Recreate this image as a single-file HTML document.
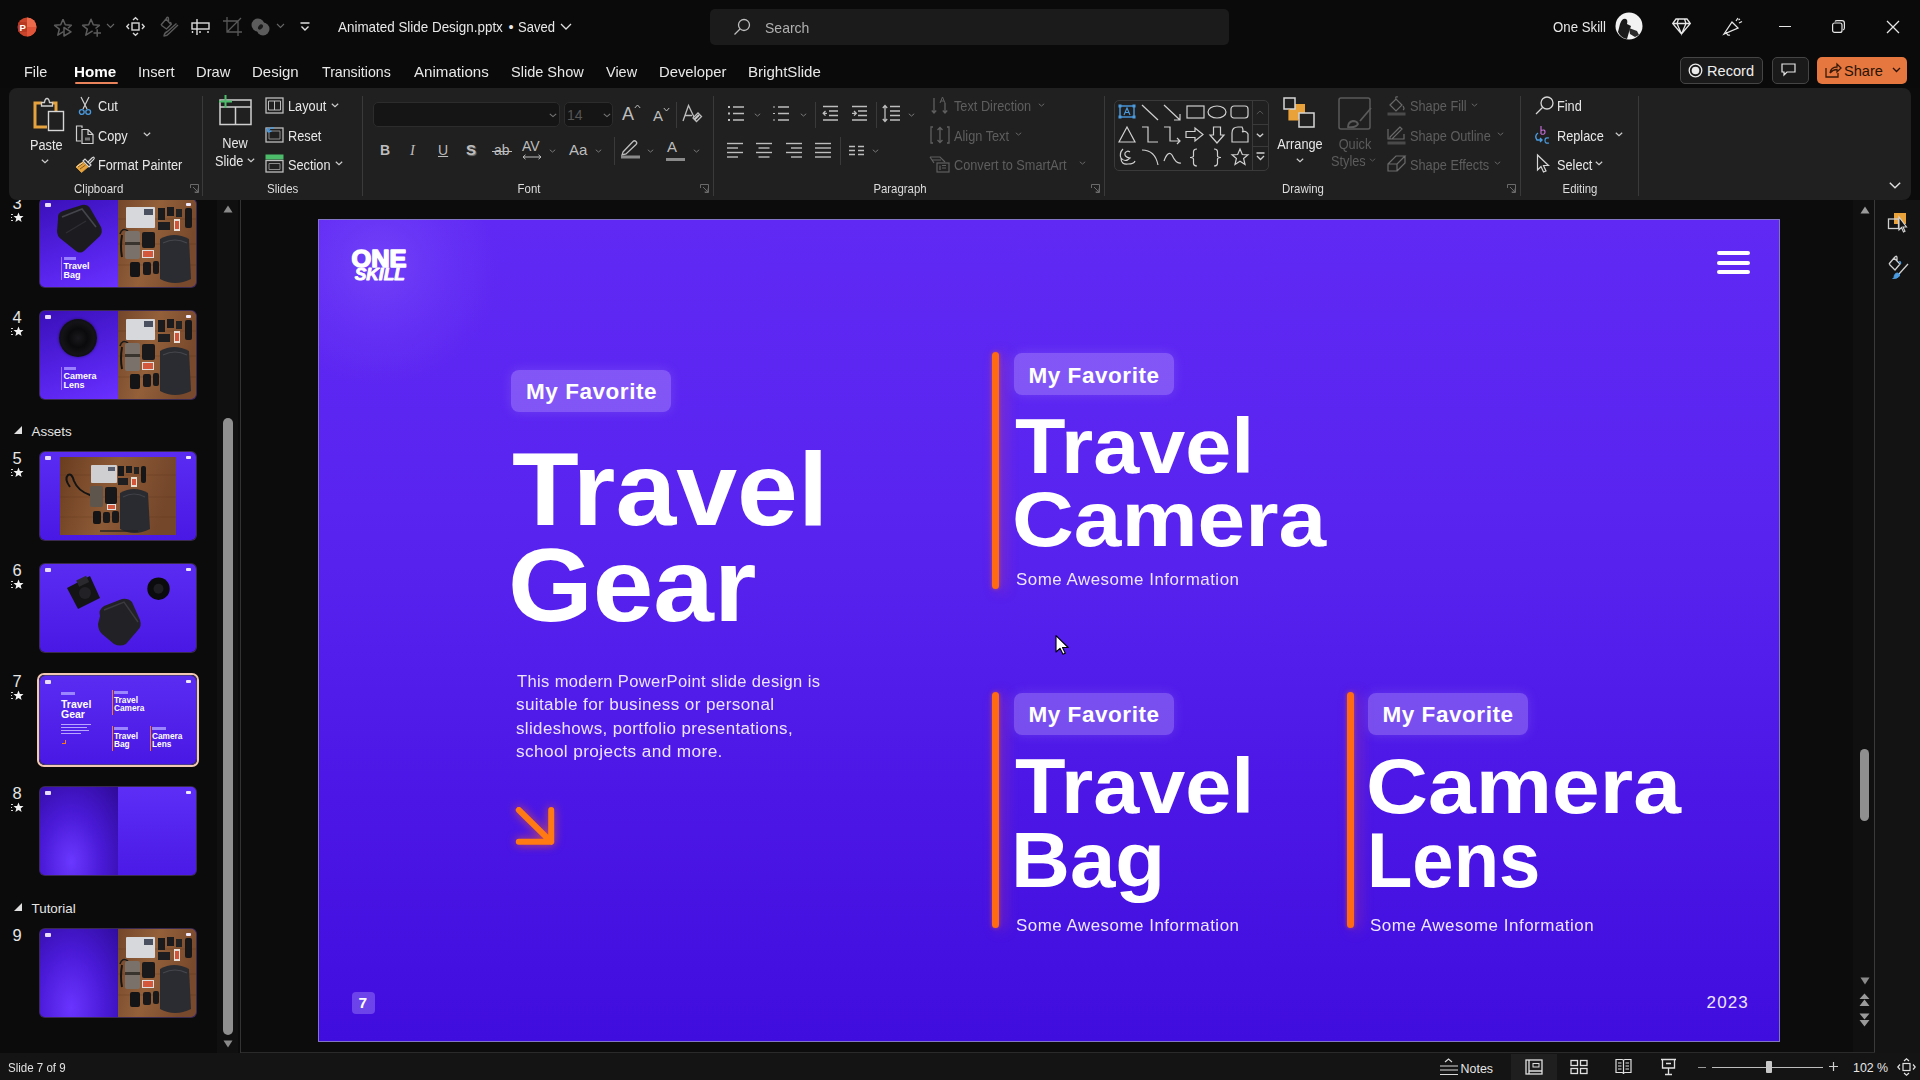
<!DOCTYPE html>
<html><head><meta charset="utf-8">
<style>
*{margin:0;padding:0;box-sizing:border-box}
html,body{width:1920px;height:1080px;overflow:hidden;background:#0b0b0b;font-family:"Liberation Sans",sans-serif;color:#e6e6e6}
.a{position:absolute}
.t{position:absolute;white-space:nowrap;line-height:1}
svg{position:absolute;overflow:visible}
/* title bar */
#title{left:0;top:0;width:1920px;height:88px;background:#0a0a0a}
.tab{position:absolute;top:65px;font-size:15px;color:#e8e8e8;white-space:nowrap;line-height:1}
/* ribbon */
#ribbon{left:9px;top:88px;width:1902px;height:112px;background:#202020;border-radius:8px}
.rl{position:absolute;font-size:13.5px;color:#e6e6e6;white-space:nowrap;line-height:1}
.dis{color:#6a6a6a}
.sep{position:absolute;width:1px;background:#3a3a3a}
.glab{position:absolute;top:182px;font-size:12.5px;color:#d8d8d8;white-space:nowrap;line-height:1}
/* thumbs */
.th{position:absolute;left:40px;width:156px;height:88px;border-radius:4px;overflow:hidden;background:#5a2af0}
.num{position:absolute;left:12px;font-size:16px;color:#e0e0e0;line-height:1}
.star{position:absolute;left:10px;font-size:12px;color:#fff;line-height:1}
/* slide */
#slide{left:318px;top:219px;width:1462px;height:823px;overflow:hidden;
 background:linear-gradient(180deg,#6029f4 0%,#5a24f0 35%,#4c17e6 70%,#400ddf 100%)}
.badge{position:absolute;width:160px;height:42px;border-radius:8px;background:rgba(205,185,255,0.33);box-shadow:0 0 12px rgba(190,170,255,0.2)}
.badge span{position:absolute;left:15px;top:11px;font-size:23px;font-weight:bold;color:#fff;line-height:1;white-space:nowrap}
.big{position:absolute;font-weight:bold;color:#fff;white-space:nowrap;line-height:1}
.bar{position:absolute;width:7px;border-radius:4px;background:#ff6a13;box-shadow:0 0 4px rgba(255,110,30,0.5),5px 2px 14px rgba(230,80,90,0.35)}
.info{position:absolute;font-size:16px;color:#f0eaff;letter-spacing:0.9px;white-space:nowrap;line-height:1}
</style></head><body>

<!-- TITLE BAR -->
<div id="title" class="a"></div>
<!-- ppt logo -->
<svg style="left:17px;top:17px" width="20" height="20" viewBox="0 0 20 20">
 <circle cx="10" cy="10" r="9.5" fill="#c8442a"/>
 <path d="M10 0.5 A9.5 9.5 0 0 1 19.5 10 L10 10 Z" fill="#ed6b4d"/>
 <path d="M19.5 10 A9.5 9.5 0 0 1 10 19.5 L10 10Z" fill="#e0553a"/>
 <rect x="1" y="5" width="9" height="10" rx="1.5" fill="#b63a22"/>
 <text x="2.6" y="13.6" font-size="9.5" font-weight="bold" fill="#fff" font-family="Liberation Sans">P</text>
</svg>
<!-- star play -->
<svg style="left:54px;top:18px" width="20" height="19" viewBox="0 0 20 19" fill="none" stroke="#5c5c5c" stroke-width="1.5" stroke-linejoin="round">
 <path d="M9.0 1.2 L11.3 6.8 L17.4 7.3 L14 10.2 M9.5 13.5 L9.0 13.9 L3.8 17.1 L5.3 11.2 L0.6 7.3 L6.7 6.8 L9.0 1.2"/>
 <path d="M10 9.5 V18 L17 13.8 Z"/>
</svg>
<svg style="left:82px;top:18px" width="20" height="19" viewBox="0 0 20 19" fill="none" stroke="#5c5c5c" stroke-width="1.5" stroke-linejoin="round">
 <path d="M10.6 13 L9.0 13.9 L3.8 17.1 L5.3 11.2 L0.6 7.3 L6.7 6.8 L9.0 1.2 L11.3 6.8 L17.4 7.3 L13.5 10.5"/>
 <path d="M11.5 15 H19 M15.2 11.2 V18.8"/>
</svg>
<svg style="left:106px;top:23px" width="9" height="6" viewBox="0 0 9 6" fill="none" stroke="#666" stroke-width="1.1"><path d="M1 1 L4.5 4.5 L8 1"/></svg>
<!-- move icon -->
<svg style="left:126px;top:17px" width="19" height="19" viewBox="0 0 19 19" fill="none" stroke="#d6d6d6" stroke-width="1.4">
 <rect x="6" y="6" width="7" height="7"/>
 <path d="M7 3 L9.5 0.8 L12 3 M7 16 L9.5 18.2 L12 16 M3 7 L0.8 9.5 L3 12 M16 7 L18.2 9.5 L16 12"/>
</svg>
<!-- paint icon gray -->
<svg style="left:160px;top:16px" width="19" height="21" viewBox="0 0 19 21" fill="none" stroke="#5a5a5a" stroke-width="1.4" stroke-linejoin="round">
 <path d="M1 9 L6 3 L7 1.5 Q8.5 0.8 8.5 3 L8.5 6 M6 3 L11 8.5 L6.5 13 L1 9"/>
 <path d="M9.5 6.5 Q11.5 6 11 9"/>
 <path d="M18 9 L9 17.5 Q7 20 4 20 Q4.5 16.5 7.5 15.5 L16.5 7.5"/>
</svg>
<!-- align icon -->
<svg style="left:191px;top:19px" width="20" height="16" viewBox="0 0 20 16" fill="none" stroke="#dcdcdc" stroke-width="1.4">
 <path d="M6 0 V16"/><rect x="1" y="4" width="17" height="6"/><path d="M1.5 12 V14 M9 12 V14 M17 12 V14"/>
</svg>
<!-- crop -->
<svg style="left:223px;top:17px" width="20" height="20" viewBox="0 0 20 20" fill="none" stroke="#585858" stroke-width="1.3">
 <path d="M4 0 V15 H19 M0 4 H15 V19 M4 15 L18 1"/>
</svg>
<!-- merge shapes -->
<svg style="left:251px;top:17px" width="20" height="20" viewBox="0 0 20 20">
 <circle cx="7" cy="8" r="6.5" fill="#5c5c5c"/><circle cx="12" cy="12" r="6.5" fill="#5c5c5c"/>
 <ellipse cx="9.5" cy="10" rx="2" ry="3" transform="rotate(40 9.5 10)" fill="#1a1a1a"/>
</svg>
<svg style="left:276px;top:23px" width="9" height="6" viewBox="0 0 9 6" fill="none" stroke="#666" stroke-width="1.1"><path d="M1 1 L4.5 4.5 L8 1"/></svg>
<svg style="left:300px;top:22px" width="10" height="10" viewBox="0 0 10 10" fill="none" stroke="#e0e0e0" stroke-width="1.4"><path d="M0.5 1 H9.5 M1.5 4.5 L5 8 L8.5 4.5"/></svg>
<svg style="left:560px;top:23px" width="12" height="7" viewBox="0 0 12 7" fill="none" stroke="#e0e0e0" stroke-width="1.3"><path d="M1 1 L6 6 L11 1"/></svg>
<!-- search -->
<div class="a" style="left:710px;top:9px;width:519px;height:36px;border-radius:5px;background:#1b1b1b"></div>
<svg style="left:733px;top:18px" width="18" height="18" viewBox="0 0 18 18" fill="none" stroke="#bdbdbd" stroke-width="1.3"><circle cx="11" cy="7" r="5.5"/><path d="M7 11 L1.5 16.5"/></svg>

<!-- TITLETEXT -->
<div class="t" style="left:338.30px;top:20.03px;font-size:14.5px;color:#e8e8e8;transform:scaleX(0.9253);transform-origin:0 0">Animated Slide Design.pptx</div>
<div class="t" style="left:518.10px;top:20.03px;font-size:14.5px;color:#e8e8e8;transform:scaleX(0.8974);transform-origin:0 0">Saved</div>
<div class="t" style="left:1552.59px;top:20.03px;font-size:14.5px;color:#e8e8e8;transform:scaleX(0.9125);transform-origin:0 0">One Skill</div>
<div class="t" style="left:764.63px;top:20.63px;font-size:14.5px;color:#b0b0b0;transform:scaleX(0.9659);transform-origin:0 0">Search</div>
<div class="t" style="left:508.5px;top:20.03px;font-size:14.5px;color:#e8e8e8">•</div>
<!-- /TITLETEXT -->
<!-- right -->

<svg style="left:1615px;top:12px" width="28" height="28" viewBox="0 0 28 28">
 <circle cx="14" cy="14" r="13.5" fill="#f2f2f2"/>
 <path d="M5 12 Q7 6 11 7 Q13 8 12 12 L16 14 L14 20 L12 27 Q6 26 3 20 Z" fill="#1a1a1a"/>
 <path d="M14 16 L22 19 L24 23 L20 25 L15 22Z" fill="#2a2a2a"/>
</svg>
<svg style="left:1672px;top:18px" width="19" height="17" viewBox="0 0 19 17" fill="none" stroke="#e6e6e6" stroke-width="1.3">
 <path d="M4 1 H15 L18.3 5.5 L9.5 16 L0.7 5.5 Z M0.7 5.5 H18.3 M6.5 1 L5 5.5 L9.5 16 L14 5.5 L12.5 1"/>
</svg>
<svg style="left:1722px;top:16px" width="22" height="21" viewBox="0 0 22 21" fill="none" stroke="#e6e6e6" stroke-width="1.3">
 <path d="M2 18 L10 6 L16 12 Z M4.5 16 Q5 20 8 19"/><path d="M14 5 L16 2 M17 7 L20 5.5 M16.5 4 L18 3"/>
</svg>
<div class="a" style="left:1779px;top:26px;width:12px;height:1.3px;background:#e6e6e6"></div>
<svg style="left:1832px;top:20px" width="13" height="13" viewBox="0 0 13 13" fill="none" stroke="#e6e6e6" stroke-width="1.2">
 <rect x="0.6" y="3" width="9.4" height="9.4" rx="2"/><path d="M3 1.5 Q3.5 0.6 5 0.6 H10 Q12.4 0.6 12.4 3 V8 Q12.4 9.5 11 10"/>
</svg>
<svg style="left:1886px;top:20px" width="14" height="14" viewBox="0 0 14 14" fill="none" stroke="#e6e6e6" stroke-width="1.3"><path d="M1 1 L13 13 M13 1 L1 13"/></svg>

<!-- TABS -->
<div class="t" style="left:23.50px;top:65.03px;font-size:14.5px;font-weight:normal;color:#e8e8e8;transform:scaleX(0.9955);transform-origin:0 0">File</div>
<div class="t" style="left:74.45px;top:65.03px;font-size:14.5px;font-weight:bold;color:#fff;transform:scaleX(1.0487);transform-origin:0 0">Home</div>
<div class="t" style="left:137.99px;top:65.03px;font-size:14.5px;font-weight:normal;color:#e8e8e8;transform:scaleX(1.0114);transform-origin:0 0">Insert</div>
<div class="t" style="left:196.48px;top:65.03px;font-size:14.5px;font-weight:normal;color:#e8e8e8;transform:scaleX(1.0152);transform-origin:0 0">Draw</div>
<div class="t" style="left:251.97px;top:65.03px;font-size:14.5px;font-weight:normal;color:#e8e8e8;transform:scaleX(1.0349);transform-origin:0 0">Design</div>
<div class="t" style="left:321.60px;top:65.03px;font-size:14.5px;font-weight:normal;color:#e8e8e8;transform:scaleX(0.9771);transform-origin:0 0">Transitions</div>
<div class="t" style="left:414.20px;top:65.03px;font-size:14.5px;font-weight:normal;color:#e8e8e8;transform:scaleX(1.0423);transform-origin:0 0">Animations</div>
<div class="t" style="left:510.60px;top:65.03px;font-size:14.5px;font-weight:normal;color:#e8e8e8;transform:scaleX(1.0028);transform-origin:0 0">Slide Show</div>
<div class="t" style="left:605.80px;top:65.03px;font-size:14.5px;font-weight:normal;color:#e8e8e8;transform:scaleX(0.9968);transform-origin:0 0">View</div>
<div class="t" style="left:658.58px;top:65.03px;font-size:14.5px;font-weight:normal;color:#e8e8e8;transform:scaleX(1.0215);transform-origin:0 0">Developer</div>
<div class="t" style="left:748.46px;top:65.03px;font-size:14.5px;font-weight:normal;color:#e8e8e8;transform:scaleX(1.0391);transform-origin:0 0">BrightSlide</div>
<div class="a" style="left:75px;top:81.5px;width:43px;height:2.6px;border-radius:2px;background:#e9835c"></div>
<!-- /TABS -->
<!-- record / comment / share -->
<div class="a" style="left:1680px;top:57px;width:83px;height:27px;border-radius:5px;border:1px solid #454545;background:#1a1a1a"></div>
<svg style="left:1688px;top:63px" width="15" height="15" viewBox="0 0 15 15"><circle cx="7.5" cy="7.5" r="6.3" fill="none" stroke="#eaeaea" stroke-width="1.3"/><circle cx="7.5" cy="7.5" r="3.8" fill="#eaeaea"/></svg>
<div class="t" style="left:1707px;top:63.5px;font-size:14.6px;color:#eeeeee">Record</div>
<div class="a" style="left:1772px;top:57px;width:37px;height:27px;border-radius:5px;border:1px solid #454545;background:#1a1a1a"></div>
<svg style="left:1781px;top:63px" width="15" height="14" viewBox="0 0 15 14" fill="none" stroke="#e6e6e6" stroke-width="1.2"><path d="M1 1 H14 V9 H6 L3 12 V9 H1 Z"/></svg>
<div class="a" style="left:1817px;top:57px;width:90px;height:27px;border-radius:5px;background:#e5773f"></div>
<svg style="left:1825px;top:62px" width="17" height="16" viewBox="0 0 17 16" fill="none" stroke="#3a1a08" stroke-width="1.3"><path d="M1 6 V15 H13 V11 M5 11 Q6 5 12 5 V2 L16 6 L12 10 V7.5 Q8 7.5 5 11"/></svg>
<div class="t" style="left:1844px;top:63.5px;font-size:14.6px;color:#2a1206">Share</div>
<svg style="left:1892px;top:67px" width="9" height="6" viewBox="0 0 9 6" fill="none" stroke="#2a1206" stroke-width="1.3"><path d="M1 1 L4.5 4.5 L8 1"/></svg>

<!-- RIBBON -->
<div id="ribbon" class="a"></div>
<svg style="left:32px;top:96px" width="34" height="37" viewBox="0 0 34 37" fill="none" stroke="#cfcfcf" stroke-width="1"><path d="M9.5 7 H3 V31 H15" stroke="#e6a23c" stroke-width="3"/><path d="M20.5 7 H24 V16" stroke="#e6a23c" stroke-width="3"/><path d="M9.5 10 V6.5 H12.5 Q13 2.5 15 2.5 Q17 2.5 17.5 6.5 H20.5 V10 Z" stroke="#cfcfcf" stroke-width="1.3" fill="#202020"/><rect x="16.5" y="15.5" width="15" height="19" stroke="#d6d6d6" stroke-width="1.4" fill="#202020"/></svg>
<div class="t" style="left:30px;top:137.56px;font-size:14px;color:#e8e8e8;transform:scaleX(0.91);transform-origin:0 0;">Paste</div>
<svg style="left:41.0px;top:158.8px" width="8" height="4.4" viewBox="0 0 8 4.4" fill="none" stroke="#cfcfcf" stroke-width="1.2"><path d="M0.8 0.8 L4.0 3.6000000000000005 L7.2 0.8"/></svg>
<svg style="left:78px;top:96px" width="14" height="20" viewBox="0 0 14 20" fill="none" stroke="#cfcfcf" stroke-width="1.2"><path d="M3 1 L9 13 M11 1 L5 13" stroke="#d0d0d0"/><circle cx="3.8" cy="16" r="2.4" stroke="#4a9be0" stroke-width="1.3"/><circle cx="10.2" cy="16" r="2.4" stroke="#4a9be0" stroke-width="1.3"/></svg>
<div class="t" style="left:98px;top:99.47px;font-size:14px;color:#e8e8e8;transform:scaleX(0.91);transform-origin:0 0;">Cut</div>
<svg style="left:75px;top:125px" width="20" height="20" viewBox="0 0 20 20" fill="none" stroke="#cfcfcf" stroke-width="1.2"><path d="M7 3 V1 H1.5 V16 H6" stroke="#d0d0d0" stroke-width="1.2"/><path d="M7 4.5 H13 L18 9.5 V18.5 H7 Z M13 4.5 V9.5 H18" stroke="#d0d0d0" stroke-width="1.2"/><rect x="10" y="12.5" width="5" height="3" fill="#777" stroke="none"/></svg>
<div class="t" style="left:98px;top:128.56px;font-size:14px;color:#e8e8e8;transform:scaleX(0.91);transform-origin:0 0;">Copy</div>
<svg style="left:143.0px;top:131.8px" width="8" height="4.4" viewBox="0 0 8 4.4" fill="none" stroke="#cfcfcf" stroke-width="1.2"><path d="M0.8 0.8 L4.0 3.6000000000000005 L7.2 0.8"/></svg>
<svg style="left:75px;top:154px" width="20" height="20" viewBox="0 0 20 20" fill="none" stroke="#cfcfcf" stroke-width="1.2"><path d="M12.5 8.5 L17 4 Q18.3 2.7 19 3.5 Q19.8 4.3 18.5 5.6 L14 10" stroke="#d8d8d8" stroke-width="1.2"/><path d="M8 7 L10 5 L16 11 L14 13 Z" stroke="#d8d8d8" stroke-width="1.2"/><path d="M8 8 Q4 9.5 1 13 L6.5 18.5 Q10 15.5 13 13 Z" fill="#e6a23c" stroke="#e6a23c" stroke-width="0.8"/><path d="M3 13 L8.5 9 M5 15 L10.5 11" stroke="#3a2a10" stroke-width="0.6"/><path d="M1.5 13 Q5 10 8 8.5" stroke="#f0e0c0" stroke-width="1"/></svg>
<div class="t" style="left:98px;top:157.66px;font-size:14px;color:#e8e8e8;transform:scaleX(0.91);transform-origin:0 0;">Format Painter</div>
<div class="t" style="left:73.5px;top:182.77px;font-size:12.4px;color:#dcdcdc;transform:scaleX(0.93);transform-origin:0 0;">Clipboard</div>
<svg style="left:190px;top:184px" width="9" height="9" viewBox="0 0 9 9" fill="none" stroke="#6a6a6a" stroke-width="1"><path d="M0.5 4 V0.5 H8.5 V8.5 H5 M3 3 L8 8 M8 4.5 V8 H4.5"/></svg>
<div class="a" style="left:202px;top:96px;width:1px;height:100px;background:#3a3a3a"></div>
<svg style="left:217px;top:94px" width="36" height="33" viewBox="0 0 36 33" fill="none" stroke="#cfcfcf" stroke-width="1.2"><rect x="3" y="6" width="31" height="24.5" stroke="#cfcfcf" stroke-width="1.5"/><path d="M3 13 H34 M18.5 13 V30.5" stroke="#cfcfcf" stroke-width="1.5"/><path d="M8.5 1 V14 M2 7.5 H15" stroke="#4cbb6a" stroke-width="2"/></svg>
<div class="t" style="left:205.0px;width:60px;text-align:center;top:135.97px;font-size:14px;color:#e8e8e8;transform:scaleX(0.91);transform-origin:50% 0">New</div>
<div class="t" style="left:215px;top:153.97px;font-size:14px;color:#e8e8e8;transform:scaleX(0.91);transform-origin:0 0;">Slide</div>
<svg style="left:247.0px;top:157.8px" width="8" height="4.4" viewBox="0 0 8 4.4" fill="none" stroke="#cfcfcf" stroke-width="1.2"><path d="M0.8 0.8 L4.0 3.6000000000000005 L7.2 0.8"/></svg>
<svg style="left:265px;top:97px" width="19" height="17" viewBox="0 0 19 17" fill="none" stroke="#cfcfcf" stroke-width="1.2"><rect x="1" y="1" width="17" height="15" stroke="#bdbdbd" stroke-width="1.3"/><path d="M3.5 4 H15.5 V13 H3.5Z M9.5 4 V13" stroke="#bdbdbd" stroke-width="1"/></svg>
<div class="t" style="left:288px;top:99.47px;font-size:14px;color:#e8e8e8;transform:scaleX(0.91);transform-origin:0 0;">Layout</div>
<svg style="left:331.0px;top:102.8px" width="8" height="4.4" viewBox="0 0 8 4.4" fill="none" stroke="#cfcfcf" stroke-width="1.2"><path d="M0.8 0.8 L4.0 3.6000000000000005 L7.2 0.8"/></svg>
<svg style="left:265px;top:126px" width="19" height="17" viewBox="0 0 19 17" fill="none" stroke="#cfcfcf" stroke-width="1.2"><rect x="1" y="2" width="17" height="14" stroke="#bdbdbd" stroke-width="1.3"/><path d="M4 5 H15 V13 H4Z" stroke="#8a8a8a" stroke-width="1"/><path d="M3 6 Q4 1 9 2 M3 6 L2 2 M3 6 L6.5 5" stroke="#4a9be0" stroke-width="1.4"/></svg>
<div class="t" style="left:288px;top:128.56px;font-size:14px;color:#e8e8e8;transform:scaleX(0.91);transform-origin:0 0;">Reset</div>
<svg style="left:265px;top:154px" width="19" height="19" viewBox="0 0 19 19" fill="none" stroke="#cfcfcf" stroke-width="1.2"><rect x="1" y="1" width="17" height="4" fill="#4cbb6a" stroke="#4cbb6a" stroke-width="1"/><rect x="1" y="6.5" width="17" height="11.5" stroke="#bdbdbd" stroke-width="1.3"/><path d="M4 9.5 H15 V15.5 H4Z" stroke="#8a8a8a" stroke-width="1"/></svg>
<div class="t" style="left:288px;top:157.66px;font-size:14px;color:#e8e8e8;transform:scaleX(0.91);transform-origin:0 0;">Section</div>
<svg style="left:335.0px;top:160.8px" width="8" height="4.4" viewBox="0 0 8 4.4" fill="none" stroke="#cfcfcf" stroke-width="1.2"><path d="M0.8 0.8 L4.0 3.6000000000000005 L7.2 0.8"/></svg>
<div class="t" style="left:267px;top:182.77px;font-size:12.4px;color:#dcdcdc;transform:scaleX(0.93);transform-origin:0 0;">Slides</div>
<div class="a" style="left:362px;top:96px;width:1px;height:100px;background:#3a3a3a"></div>
<div class="a" style="left:373px;top:102px;width:187px;height:25px;border-radius:5px;background:#151515;border:1px solid #2c2c2c"></div>
<svg style="left:549.0px;top:112.8px" width="8" height="4.4" viewBox="0 0 8 4.4" fill="none" stroke="#777" stroke-width="1.1"><path d="M0.8 0.8 L4.0 3.6000000000000005 L7.2 0.8"/></svg>
<div class="a" style="left:564px;top:102px;width:49px;height:25px;border-radius:5px;background:#151515;border:1px solid #2c2c2c"></div>
<div class="t" style="left:567px;top:107.97px;font-size:14px;color:#555;transform:scaleX(1);transform-origin:0 0;">14</div>
<svg style="left:603.0px;top:112.8px" width="8" height="4.4" viewBox="0 0 8 4.4" fill="none" stroke="#777" stroke-width="1.1"><path d="M0.8 0.8 L4.0 3.6000000000000005 L7.2 0.8"/></svg>
<div class="t" style="left:622px;top:104.95px;font-size:18px;color:#bdbdbd;transform:scaleX(1);transform-origin:0 0;">A</div>
<svg style="left:634px;top:104px" width="7" height="5" viewBox="0 0 7 5" fill="none" stroke="#bdbdbd" stroke-width="1"><path d="M0.8 4 L3.5 1 L6.2 4"/></svg>
<div class="t" style="left:653px;top:108.46px;font-size:15px;color:#bdbdbd;transform:scaleX(1);transform-origin:0 0;">A</div>
<svg style="left:663px;top:107px" width="7" height="5" viewBox="0 0 7 5" fill="none" stroke="#bdbdbd" stroke-width="1"><path d="M0.8 1 L3.5 4 L6.2 1"/></svg>
<div class="a" style="left:676px;top:102px;width:1px;height:26px;background:#3a3a3a"></div>
<svg style="left:682px;top:104px" width="20" height="19" viewBox="0 0 20 19" fill="none" stroke="#cfcfcf" stroke-width="1.2"><path d="M1 17 L6.5 1.5 L12 13 M3 11.5 H10" stroke="#bdbdbd" stroke-width="1.3"/><path d="M11 14 L16 9 L19.5 12.5 L14.5 17.5 Z" stroke="#bdbdbd" stroke-width="1.3"/><path d="M12.5 15.5 L17 11" stroke="#ccc" stroke-width="2"/></svg>
<div class="t" style="left:380px;top:142.97px;font-size:14px;color:#bdbdbd;transform:scaleX(1);transform-origin:0 0;font-weight:bold">B</div>
<div class="t" style="left:410px;top:142.71px;font-size:14.5px;color:#bdbdbd;transform:scaleX(1);transform-origin:0 0;font-style:italic;font-family:'Liberation Serif'">I</div>
<div class="t" style="left:438px;top:142.97px;font-size:14px;color:#bdbdbd;transform:scaleX(1);transform-origin:0 0;text-decoration:underline">U</div>
<div class="t" style="left:466px;top:142.46px;font-size:15px;color:#bdbdbd;transform:scaleX(1);transform-origin:0 0;font-weight:bold;text-shadow:1px 1px 1px #777">S</div>
<div class="t" style="left:494px;top:142.97px;font-size:14px;color:#bdbdbd;transform:scaleX(1);transform-origin:0 0;">ab</div>
<div class="a" style="left:492px;top:151px;width:20px;height:1.2px;background:#bdbdbd"></div>
<div class="t" style="left:522px;top:138.97px;font-size:14px;color:#bdbdbd;transform:scaleX(1);transform-origin:0 0;">AV</div>
<svg style="left:522px;top:154px" width="20" height="6" viewBox="0 0 20 6" fill="none" stroke="#bdbdbd" stroke-width="1"><path d="M1 3 H19 M3.5 0.8 L1 3 L3.5 5.2 M16.5 0.8 L19 3 L16.5 5.2"/></svg>
<svg style="left:548.5px;top:149.075px" width="7" height="3.8500000000000005" viewBox="0 0 7 3.8500000000000005" fill="none" stroke="#777" stroke-width="1"><path d="M0.8 0.8 L3.5 3.0500000000000007 L6.2 0.8"/></svg>
<div class="t" style="left:569px;top:142.46px;font-size:15px;color:#bdbdbd;transform:scaleX(1);transform-origin:0 0;">Aa</div>
<svg style="left:594.5px;top:149.075px" width="7" height="3.8500000000000005" viewBox="0 0 7 3.8500000000000005" fill="none" stroke="#777" stroke-width="1"><path d="M0.8 0.8 L3.5 3.0500000000000007 L6.2 0.8"/></svg>
<div class="a" style="left:614px;top:137px;width:1px;height:28px;background:#3a3a3a"></div>
<svg style="left:620px;top:139px" width="20" height="19" viewBox="0 0 20 19" fill="none" stroke="#cfcfcf" stroke-width="1.2"><path d="M3 13 L13 2.5 Q14.5 1 16 2.5 Q17.5 4 16 5.5 L6 15 L2 16 Z" stroke="#bdbdbd" stroke-width="1.3"/><rect x="1" y="16.5" width="19" height="3" fill="#8a8a8a" stroke="none"/></svg>
<svg style="left:646.5px;top:149.075px" width="7" height="3.8500000000000005" viewBox="0 0 7 3.8500000000000005" fill="none" stroke="#777" stroke-width="1"><path d="M0.8 0.8 L3.5 3.0500000000000007 L6.2 0.8"/></svg>
<div class="t" style="left:667px;top:139.46px;font-size:15px;color:#bdbdbd;transform:scaleX(1);transform-origin:0 0;">A</div>
<div class="a" style="left:666px;top:158px;width:19px;height:3px;background:#8a8a8a"></div>
<svg style="left:692.5px;top:149.075px" width="7" height="3.8500000000000005" viewBox="0 0 7 3.8500000000000005" fill="none" stroke="#777" stroke-width="1"><path d="M0.8 0.8 L3.5 3.0500000000000007 L6.2 0.8"/></svg>
<div class="t" style="left:499.0px;width:60px;text-align:center;top:182.77px;font-size:12.4px;color:#dcdcdc;transform:scaleX(0.92);transform-origin:50% 0">Font</div>
<svg style="left:700px;top:184px" width="9" height="9" viewBox="0 0 9 9" fill="none" stroke="#6a6a6a" stroke-width="1"><path d="M0.5 4 V0.5 H8.5 V8.5 H5 M3 3 L8 8 M8 4.5 V8 H4.5"/></svg>
<div class="a" style="left:713px;top:96px;width:1px;height:100px;background:#3a3a3a"></div>
<svg style="left:727px;top:105px" width="18" height="17" viewBox="0 0 18 17" fill="none" stroke="#bdbdbd" stroke-width="1.4"><path d="M1 2 H3 M1 8.5 H3 M1 15 H3" stroke-width="2.2"/><path d="M6 2 H17 M6 8.5 H17 M6 15 H17"/></svg>
<svg style="left:753.5px;top:113.075px" width="7" height="3.8500000000000005" viewBox="0 0 7 3.8500000000000005" fill="none" stroke="#777" stroke-width="1"><path d="M0.8 0.8 L3.5 3.0500000000000007 L6.2 0.8"/></svg>
<svg style="left:772px;top:105px" width="18" height="17" viewBox="0 0 18 17" fill="none" stroke="#bdbdbd" stroke-width="1.4"><path d="M1 2 H3 M1 8.5 H3 M1 15 H3" stroke-width="1.2"/><path d="M6 2 H17 M6 8.5 H17 M6 15 H17"/></svg>
<svg style="left:799.5px;top:113.075px" width="7" height="3.8500000000000005" viewBox="0 0 7 3.8500000000000005" fill="none" stroke="#777" stroke-width="1"><path d="M0.8 0.8 L3.5 3.0500000000000007 L6.2 0.8"/></svg>
<div class="a" style="left:815px;top:102px;width:1px;height:26px;background:#3a3a3a"></div>
<svg style="left:822px;top:105px" width="17" height="17" viewBox="0 0 17 17" fill="none" stroke="#bdbdbd" stroke-width="1.3"><path d="M1 1.5 H16 M7 6 H16 M7 10.5 H16 M1 15 H16 M5 8.3 H1.5 M3.5 6 L1.2 8.3 L3.5 10.6"/></svg>
<svg style="left:851px;top:105px" width="17" height="17" viewBox="0 0 17 17" fill="none" stroke="#bdbdbd" stroke-width="1.3"><path d="M1 1.5 H16 M7 6 H16 M7 10.5 H16 M1 15 H16 M1 8.3 H5 M3 6 L5.3 8.3 L3 10.6"/></svg>
<div class="a" style="left:876px;top:102px;width:1px;height:26px;background:#3a3a3a"></div>
<svg style="left:882px;top:104px" width="19" height="19" viewBox="0 0 19 19" fill="none" stroke="#bdbdbd" stroke-width="1.3"><path d="M3 1.5 V17.5 M0.8 4 L3 1.5 L5.2 4 M0.8 15 L3 17.5 L5.2 15 M8 2.5 H18 M8 7 H18 M8 11.5 H18 M8 16 H18"/></svg>
<svg style="left:907.5px;top:113.075px" width="7" height="3.8500000000000005" viewBox="0 0 7 3.8500000000000005" fill="none" stroke="#777" stroke-width="1"><path d="M0.8 0.8 L3.5 3.0500000000000007 L6.2 0.8"/></svg>
<svg style="left:727px;top:142px" width="17" height="18" viewBox="0 0 17 18" fill="none" stroke="#bdbdbd" stroke-width="1.4"><path d="M0 1.5 H16"/><path d="M0 6.0 H11"/><path d="M0 10.5 H16"/><path d="M0 15.0 H11"/></svg>
<svg style="left:756px;top:142px" width="17" height="18" viewBox="0 0 17 18" fill="none" stroke="#bdbdbd" stroke-width="1.4"><path d="M0 1.5 H16"/><path d="M2.5 6.0 H13.5"/><path d="M0 10.5 H16"/><path d="M2.5 15.0 H13.5"/></svg>
<svg style="left:786px;top:142px" width="17" height="18" viewBox="0 0 17 18" fill="none" stroke="#bdbdbd" stroke-width="1.4"><path d="M0 1.5 H16"/><path d="M5 6.0 H16"/><path d="M0 10.5 H16"/><path d="M5 15.0 H16"/></svg>
<svg style="left:815px;top:142px" width="17" height="18" viewBox="0 0 17 18" fill="none" stroke="#bdbdbd" stroke-width="1.4"><path d="M0 1.5 H16"/><path d="M0 6.0 H16"/><path d="M0 10.5 H16"/><path d="M0 15.0 H16"/></svg>
<div class="a" style="left:840px;top:137px;width:1px;height:28px;background:#3a3a3a"></div>
<svg style="left:849px;top:145px" width="15" height="12" viewBox="0 0 15 12" fill="none" stroke="#bdbdbd" stroke-width="1.3"><path d="M0 1.5 H6 M9 1.5 H15 M0 5.5 H6 M9 5.5 H15 M0 9.5 H6 M9 9.5 H15"/></svg>
<svg style="left:871.5px;top:149.075px" width="7" height="3.8500000000000005" viewBox="0 0 7 3.8500000000000005" fill="none" stroke="#777" stroke-width="1"><path d="M0.8 0.8 L3.5 3.0500000000000007 L6.2 0.8"/></svg>
<svg style="left:931px;top:96px" width="18" height="19" viewBox="0 0 18 19" fill="none" stroke="#5f5f5f" stroke-width="1.3"><path d="M3 2 V17 M0.8 14.5 L3 17 L5.2 14.5 M14 7 V17 M11.8 14.5 L14 17 L16.2 14.5" /><path d="M9 7 L11.5 1 L14 7 M10 5 H13" stroke-width="1"/></svg>
<div class="t" style="left:953.7px;top:99.47px;font-size:14px;color:#5e5e5e;transform:scaleX(0.91);transform-origin:0 0;">Text Direction</div>
<svg style="left:1037.5px;top:103.075px" width="7" height="3.8500000000000005" viewBox="0 0 7 3.8500000000000005" fill="none" stroke="#666" stroke-width="1"><path d="M0.8 0.8 L3.5 3.0500000000000007 L6.2 0.8"/></svg>
<svg style="left:930px;top:126px" width="20" height="18" viewBox="0 0 20 18" fill="none" stroke="#5f5f5f" stroke-width="1.3"><path d="M3 1 H1 V17 H3 M17 1 H19 V17 H17 M10 1 V17 M7.5 4 L10 1.5 L12.5 4 M7.5 14 L10 16.5 L12.5 14"/></svg>
<div class="t" style="left:953.7px;top:128.56px;font-size:14px;color:#5e5e5e;transform:scaleX(0.91);transform-origin:0 0;">Align Text</div>
<svg style="left:1014.5px;top:132.075px" width="7" height="3.8500000000000005" viewBox="0 0 7 3.8500000000000005" fill="none" stroke="#666" stroke-width="1"><path d="M0.8 0.8 L3.5 3.0500000000000007 L6.2 0.8"/></svg>
<svg style="left:929px;top:155px" width="21" height="18" viewBox="0 0 21 18" fill="none" stroke="#5f5f5f" stroke-width="1.2"><path d="M1 2 H11 L16 7 M3 5 H12 M1 2 L5 8"/><rect x="8" y="8" width="12" height="9"/><path d="M11 10.5 V15 M13 10.5 H17 M13 13 H17"/></svg>
<div class="t" style="left:953.7px;top:157.66px;font-size:14px;color:#5e5e5e;transform:scaleX(0.91);transform-origin:0 0;">Convert to SmartArt</div>
<svg style="left:1078.5px;top:161.075px" width="7" height="3.8500000000000005" viewBox="0 0 7 3.8500000000000005" fill="none" stroke="#666" stroke-width="1"><path d="M0.8 0.8 L3.5 3.0500000000000007 L6.2 0.8"/></svg>
<div class="t" style="left:849.6px;width:100px;text-align:center;top:182.77px;font-size:12.4px;color:#dcdcdc;transform:scaleX(0.92);transform-origin:50% 0">Paragraph</div>
<svg style="left:1091px;top:184px" width="9" height="9" viewBox="0 0 9 9" fill="none" stroke="#6a6a6a" stroke-width="1"><path d="M0.5 4 V0.5 H8.5 V8.5 H5 M3 3 L8 8 M8 4.5 V8 H4.5"/></svg>
<div class="a" style="left:1104px;top:96px;width:1px;height:100px;background:#3a3a3a"></div>
<div class="a" style="left:1114px;top:100px;width:155px;height:71px;border-radius:5px;border:1px solid #3a3a3a"></div>
<div class="a" style="left:1252px;top:101px;width:1px;height:69px;background:#3a3a3a"></div>
<div class="a" style="left:1253px;top:124px;width:15px;height:1px;background:#3a3a3a"></div><div class="a" style="left:1253px;top:146px;width:15px;height:1px;background:#3a3a3a"></div>
<svg style="left:1256px;top:110px" width="8" height="5" viewBox="0 0 8 5" fill="none" stroke="#555" stroke-width="1"><path d="M0.8 4 L4 1 L7.2 4"/></svg>
<svg style="left:1256.0px;top:132.8px" width="8" height="4.4" viewBox="0 0 8 4.4" fill="none" stroke="#cfcfcf" stroke-width="1.3"><path d="M0.8 0.8 L4.0 3.6000000000000005 L7.2 0.8"/></svg>
<svg style="left:1256px;top:152px" width="9" height="9" viewBox="0 0 9 9" fill="none" stroke="#cfcfcf" stroke-width="1.3"><path d="M0.5 1 H8.5 M1 4 L4.5 7.5 L8 4"/></svg>
<svg style="left:1118px;top:104px" width="18" height="15" viewBox="0 0 18 15" fill="none" stroke="#cfcfcf" stroke-width="1.2"><rect x="2" y="2" width="14" height="11" stroke="#4a9be0" stroke-width="1.4"/><rect x="0.5" y="0.5" width="3" height="3" fill="#4a9be0" stroke="none"/><rect x="14.5" y="0.5" width="3" height="3" fill="#4a9be0" stroke="none"/><rect x="0.5" y="11.5" width="3" height="3" fill="#4a9be0" stroke="none"/><rect x="14.5" y="11.5" width="3" height="3" fill="#4a9be0" stroke="none"/><path d="M6 11 L9 4 L12 11 M7 8.5 H11" stroke="#4a9be0" stroke-width="1.1"/></svg>
<svg style="left:1141px;top:104px" width="18" height="17" viewBox="0 0 18 17" fill="none" stroke="#d0d0d0" stroke-width="1.2"><path d="M1 1 L17 16"/></svg>
<svg style="left:1163px;top:104px" width="19" height="17" viewBox="0 0 19 17" fill="none" stroke="#d0d0d0" stroke-width="1.2"><path d="M1 1 L17 16 M11 16 H17 V10"/></svg>
<svg style="left:1186px;top:105px" width="19" height="14" viewBox="0 0 19 14" fill="none" stroke="#d0d0d0" stroke-width="1.2"><rect x="1" y="1" width="17" height="12"/></svg>
<svg style="left:1207px;top:105px" width="20" height="14" viewBox="0 0 20 14" fill="none" stroke="#d0d0d0" stroke-width="1.2"><ellipse cx="10" cy="7" rx="9" ry="6"/></svg>
<svg style="left:1230px;top:105px" width="19" height="14" viewBox="0 0 19 14" fill="none" stroke="#d0d0d0" stroke-width="1.2"><rect x="1" y="1" width="17" height="12" rx="3"/></svg>
<svg style="left:1118px;top:126px" width="18" height="17" viewBox="0 0 18 17" fill="none" stroke="#d0d0d0" stroke-width="1.2"><path d="M9 1 L17 16 H1 Z"/></svg>
<svg style="left:1141px;top:126px" width="18" height="17" viewBox="0 0 18 17" fill="none" stroke="#d0d0d0" stroke-width="1.2"><path d="M1 1 H7 V16 H17"/></svg>
<svg style="left:1163px;top:126px" width="19" height="18" viewBox="0 0 19 18" fill="none" stroke="#d0d0d0" stroke-width="1.2"><path d="M1 1 H7 V15 H17 M14 12 L17 15 L14 18"/></svg>
<svg style="left:1185px;top:127px" width="19" height="15" viewBox="0 0 19 15" fill="none" stroke="#d0d0d0" stroke-width="1.2"><path d="M1 4.5 H10 V1 L18 7.5 L10 14 V10.5 H1 Z"/></svg>
<svg style="left:1209px;top:126px" width="16" height="18" viewBox="0 0 16 18" fill="none" stroke="#d0d0d0" stroke-width="1.2"><path d="M4.5 1 H11.5 V9 H15 L8 17 L1 9 H4.5 Z"/></svg>
<svg style="left:1231px;top:126px" width="18" height="17" viewBox="0 0 18 17" fill="none" stroke="#d0d0d0" stroke-width="1.2"><path d="M1 16 V7 Q1 1 7 1 H11 Q13 5 11 6 Q15 4 17 8 V16 Z"/></svg>
<svg style="left:1118px;top:148px" width="18" height="18" viewBox="0 0 18 18" fill="none" stroke="#d0d0d0" stroke-width="1.2"><path d="M5 1 Q1 5 3 10 Q7 15 12 10 Q6 9 7 5 Q9 2 12 4 M3 10 Q3 17 10 16 Q16 16 17 13"/></svg>
<svg style="left:1141px;top:148px" width="18" height="18" viewBox="0 0 18 18" fill="none" stroke="#d0d0d0" stroke-width="1.2"><path d="M1 2 Q14 2 17 17"/></svg>
<svg style="left:1163px;top:149px" width="19" height="17" viewBox="0 0 19 17" fill="none" stroke="#d0d0d0" stroke-width="1.2"><path d="M1 12 Q5 1 9 6 Q13 15 18 14"/></svg>
<svg style="left:1189px;top:148px" width="10" height="19" viewBox="0 0 10 19" fill="none" stroke="#d0d0d0" stroke-width="1.2"><path d="M8 1 Q4 1 4.5 5 V8 Q4.5 9.5 1 9.5 Q4.5 9.5 4.5 11 V14 Q4 18 8 18"/></svg>
<svg style="left:1212px;top:148px" width="10" height="19" viewBox="0 0 10 19" fill="none" stroke="#d0d0d0" stroke-width="1.2"><path d="M2 1 Q6 1 5.5 5 V8 Q5.5 9.5 9 9.5 Q5.5 9.5 5.5 11 V14 Q6 18 2 18"/></svg>
<svg style="left:1231px;top:148px" width="18" height="18" viewBox="0 0 18 18" fill="none" stroke="#d0d0d0" stroke-width="1.2"><path d="M9 1 L11.3 6.5 L17 6.8 L12.6 10.5 L14 16.5 L9 13.3 L4 16.5 L5.4 10.5 L1 6.8 L6.7 6.5 Z"/></svg>
<svg style="left:1283px;top:97px" width="35" height="33" viewBox="0 0 35 33" fill="none" stroke="#cfcfcf" stroke-width="1.2"><rect x="6" y="7" width="16" height="16" fill="#e9a13a" stroke="none"/><rect x="1" y="1" width="11" height="11" stroke="#d6d6d6" stroke-width="1.5" fill="#202020"/><rect x="16" y="16" width="15" height="14" stroke="#d6d6d6" stroke-width="1.5" fill="#202020"/><path d="M6 12 V23 H16" stroke="#e9a13a"/></svg>
<div class="t" style="left:1260.0px;width:80px;text-align:center;top:136.77px;font-size:14px;color:#e8e8e8;transform:scaleX(0.91);transform-origin:50% 0">Arrange</div>
<svg style="left:1296.0px;top:157.8px" width="8" height="4.4" viewBox="0 0 8 4.4" fill="none" stroke="#cfcfcf" stroke-width="1.2"><path d="M0.8 0.8 L4.0 3.6000000000000005 L7.2 0.8"/></svg>
<svg style="left:1338px;top:97px" width="36" height="33" viewBox="0 0 36 33" fill="none" stroke="#cfcfcf" stroke-width="1.2"><rect x="1" y="1" width="31" height="31" rx="2" stroke="#5a5a5a" stroke-width="1.5"/><path d="M33 11 L22 24 M10 30 Q10 25 15 24 Q19 24 20 27 Q18 31 10 30Z" stroke="#5a5a5a" stroke-width="1.8"/></svg>
<div class="t" style="left:1325.0px;width:60px;text-align:center;top:136.77px;font-size:14px;color:#5c5c5c;transform:scaleX(0.91);transform-origin:50% 0">Quick</div>
<div class="t" style="left:1331px;top:153.97px;font-size:14px;color:#5c5c5c;transform:scaleX(0.91);transform-origin:0 0;">Styles</div>
<svg style="left:1368.5px;top:158.075px" width="7" height="3.8500000000000005" viewBox="0 0 7 3.8500000000000005" fill="none" stroke="#555" stroke-width="1"><path d="M0.8 0.8 L3.5 3.0500000000000007 L6.2 0.8"/></svg>
<svg style="left:1387px;top:96px" width="19" height="20" viewBox="0 0 19 20" fill="none" stroke="#cfcfcf" stroke-width="1.2"><path d="M3 9 L9 3 L15 9 L9 15 Z M9 3 Q8 0 11 1" stroke="#6a6a6a"/><path d="M16 10 Q18 13 16 14" stroke="#6a6a6a"/><rect x="0.5" y="16.5" width="18" height="3" fill="#4a4a4a" stroke="none"/></svg>
<div class="t" style="left:1410.4px;top:99.47px;font-size:14px;color:#5e5e5e;transform:scaleX(0.91);transform-origin:0 0;">Shape Fill</div>
<svg style="left:1470.5px;top:103.075px" width="7" height="3.8500000000000005" viewBox="0 0 7 3.8500000000000005" fill="none" stroke="#666" stroke-width="1"><path d="M0.8 0.8 L3.5 3.0500000000000007 L6.2 0.8"/></svg>
<svg style="left:1387px;top:125px" width="19" height="20" viewBox="0 0 19 20" fill="none" stroke="#cfcfcf" stroke-width="1.2"><path d="M13 2 L3 12 V14 H5 L15 4 Z M1 4 V14 H17 V9" stroke="#6a6a6a"/><rect x="0.5" y="16.5" width="18" height="3" fill="#4a4a4a" stroke="none"/></svg>
<div class="t" style="left:1410.4px;top:128.56px;font-size:14px;color:#5e5e5e;transform:scaleX(0.91);transform-origin:0 0;">Shape Outline</div>
<svg style="left:1496.5px;top:132.075px" width="7" height="3.8500000000000005" viewBox="0 0 7 3.8500000000000005" fill="none" stroke="#666" stroke-width="1"><path d="M0.8 0.8 L3.5 3.0500000000000007 L6.2 0.8"/></svg>
<svg style="left:1387px;top:155px" width="19" height="17" viewBox="0 0 19 17" fill="none" stroke="#cfcfcf" stroke-width="1.2"><path d="M1 9 L9 1 H18 L10 9 V16 H1 Z M10 9 H1 M18 1 V8 L10 16" stroke="#6a6a6a"/></svg>
<div class="t" style="left:1410.4px;top:157.66px;font-size:14px;color:#5e5e5e;transform:scaleX(0.91);transform-origin:0 0;">Shape Effects</div>
<svg style="left:1493.5px;top:161.075px" width="7" height="3.8500000000000005" viewBox="0 0 7 3.8500000000000005" fill="none" stroke="#666" stroke-width="1"><path d="M0.8 0.8 L3.5 3.0500000000000007 L6.2 0.8"/></svg>
<div class="t" style="left:1263.0px;width:80px;text-align:center;top:182.77px;font-size:12.4px;color:#dcdcdc;transform:scaleX(0.92);transform-origin:50% 0">Drawing</div>
<svg style="left:1507px;top:184px" width="9" height="9" viewBox="0 0 9 9" fill="none" stroke="#6a6a6a" stroke-width="1"><path d="M0.5 4 V0.5 H8.5 V8.5 H5 M3 3 L8 8 M8 4.5 V8 H4.5"/></svg>
<div class="a" style="left:1520px;top:96px;width:1px;height:100px;background:#3a3a3a"></div>
<svg style="left:1535px;top:96px" width="19" height="19" viewBox="0 0 19 19" fill="none" stroke="#d6d6d6" stroke-width="1.3"><circle cx="12" cy="7" r="6"/><path d="M7.5 11.5 L1 18"/></svg>
<div class="t" style="left:1557.3px;top:99.47px;font-size:14px;color:#e8e8e8;transform:scaleX(0.91);transform-origin:0 0;">Find</div>
<svg style="left:1533px;top:125px" width="18" height="20" viewBox="0 0 18 20" fill="none" stroke="#cfcfcf" stroke-width="1.2"><path d="M8 1 V9 M8 5.5 Q12 4 12 7 Q12 10 8 9" stroke="#c36bd6" stroke-width="1.2"/><path d="M5 8 Q1 11 4 15 H9 M7 13 L9 15 L7 17" stroke="#4a9be0" stroke-width="1.4"/><path d="M16 13 Q12 12 12 15.5 Q12 19 16 18" stroke="#4a9be0" stroke-width="1.2"/></svg>
<div class="t" style="left:1557.3px;top:128.56px;font-size:14px;color:#e8e8e8;transform:scaleX(0.91);transform-origin:0 0;">Replace</div>
<svg style="left:1615.0px;top:131.8px" width="8" height="4.4" viewBox="0 0 8 4.4" fill="none" stroke="#cfcfcf" stroke-width="1.2"><path d="M0.8 0.8 L4.0 3.6000000000000005 L7.2 0.8"/></svg>
<svg style="left:1536px;top:154px" width="14" height="19" viewBox="0 0 14 19" fill="none" stroke="#d6d6d6" stroke-width="1.2"><path d="M1.5 1 V16 L5 12.5 L7.5 18 L10 17 L7.5 11.5 H12.5 Z"/></svg>
<div class="t" style="left:1557.3px;top:157.66px;font-size:14px;color:#e8e8e8;transform:scaleX(0.91);transform-origin:0 0;">Select</div>
<svg style="left:1595.0px;top:160.8px" width="8" height="4.4" viewBox="0 0 8 4.4" fill="none" stroke="#cfcfcf" stroke-width="1.2"><path d="M0.8 0.8 L4.0 3.6000000000000005 L7.2 0.8"/></svg>
<div class="t" style="left:1540.0px;width:80px;text-align:center;top:182.77px;font-size:12.4px;color:#dcdcdc;transform:scaleX(0.92);transform-origin:50% 0">Editing</div>
<div class="a" style="left:1638px;top:96px;width:1px;height:100px;background:#3a3a3a"></div>
<svg style="left:1889.0px;top:181.7px" width="12" height="6.6000000000000005" viewBox="0 0 12 6.6000000000000005" fill="none" stroke="#e0e0e0" stroke-width="1.4"><path d="M0.8 0.8 L6.0 5.800000000000001 L11.2 0.8"/></svg>
<!-- /RIBBON -->

<!-- THUMBNAIL PANEL -->
<div class="a" style="left:0;top:200px;width:241px;height:853px;background:#0b0b0b;overflow:hidden"><div class="a" style="left:0;top:-200px;width:241px;height:1080px">
<div class="a" style="left:40px;top:199px;width:156px;height:88px;border-radius:5px;overflow:hidden;background:linear-gradient(180deg,#5a2cf2 0%,#4a18e4 100%);box-shadow:0 0 0 1px #3a2a50"><div class="a" style="left:0;top:0;width:78px;height:88px;background:linear-gradient(160deg,#3a10b8 0%,#5522e8 60%,#6a30ff 100%)"></div><svg style="left:12px;top:4px" width="54" height="52" viewBox="0 0 54 52"><path d="M6 16 Q5 10 11 8 L30 2 Q35 1 38 5 L49 24 Q51 29 48 33 L32 48 Q28 51 24 48 L9 36 Q5 33 5 28 Z" fill="#1c1c20"/><path d="M10 14 L30 6 L44 24" stroke="#44444c" stroke-width="1.6" fill="none"/><path d="M14 30 L34 18" stroke="#2e2e34" stroke-width="1.2" fill="none"/></svg><div class="a" style="left:21px;top:58px;width:1px;height:23px;background:#a070ff"></div><div class="a" style="left:24px;top:58px;width:12px;height:3px;background:#9a80ff"></div><div class="t" style="left:23.5px;top:63px;font-size:9px;font-weight:bold;color:#fff;line-height:8.6px">Travel<br>Bag</div><svg style="left:78px;top:0px;" width="78" height="88" viewBox="0 0 78 88" preserveAspectRatio="none"><defs><linearGradient id="wd" x1="0" y1="0" x2="1" y2="0.3"><stop offset="0" stop-color="#74462a"/><stop offset="0.5" stop-color="#93603a"/><stop offset="1" stop-color="#78492c"/></linearGradient></defs><rect width="78" height="88" fill="url(#wd)"/><path d="M0 20 H78 M0 45 H78 M0 66 H78" stroke="#5a321a" stroke-width="0.6" opacity="0.5"/><rect x="8" y="8" width="29" height="21" rx="1" fill="#d6d8dc"/><rect x="26" y="10" width="9" height="6" fill="#4a5060"/><rect x="40" y="9" width="7" height="12" fill="#1b1b1d"/><rect x="49" y="8" width="7" height="9" fill="#1b1b1d"/><rect x="58" y="10" width="6" height="8" fill="#222"/><rect x="67" y="9" width="7" height="20" rx="2" fill="#17171a"/><rect x="40" y="23" width="12" height="8" fill="#1e1e20"/><rect x="56" y="20" width="6" height="12" fill="#e8e0d8"/><rect x="57" y="22" width="4" height="8" fill="#d2553a"/><path d="M2 35 Q4 28 10 32" stroke="#1a1a1a" stroke-width="1.6" fill="none"/><path d="M4 36 Q2 48 4 58" stroke="#151515" stroke-width="2" fill="none"/><rect x="7" y="32" width="15" height="28" rx="2" fill="#7a726a"/><rect x="7" y="43" width="15" height="3" fill="#3a342e"/><rect x="24" y="33" width="13" height="16" rx="2" fill="#19191b"/><rect x="24" y="51" width="12" height="8" fill="#e0e0e0"/><rect x="25" y="52" width="10" height="6" fill="#d4583b"/><path d="M42 40 Q56 32 71 40 L73 80 Q57 88 42 80 Z" fill="#2b2c31"/><path d="M45 44 Q57 38 69 44" stroke="#46474e" stroke-width="1.2" fill="none"/><rect x="12" y="63" width="10" height="15" rx="2" fill="#141416"/><rect x="25" y="63" width="8" height="13" rx="2" fill="#18181a"/><rect x="35" y="62" width="6" height="13" rx="2" fill="#18181a"/></svg><div class="a" style="left:5px;top:4px;width:6px;height:4px;background:#e8ddff;border-radius:1px"></div><div class="a" style="right:5px;top:4px;width:5px;height:3px;background:#f0eaff;border-radius:1px"></div></div>
<div class="t" style="left:12.5px;top:195px;font-size:16.5px;color:#e6e6e6;font-family:'Liberation Sans'">3</div><svg style="left:10px;top:212px" width="14" height="11" viewBox="0 0 14 11"><path d="M8.5 0.5 L9.9 3.9 L13.5 4.1 L10.7 6.4 L11.6 10 L8.5 8 L5.4 10 L6.3 6.4 L3.5 4.1 L7.1 3.9 Z" fill="#f2f2f2"/><path d="M1 2.5 H3 M1 5.5 H2 M1 8.5 H3" stroke="#cfcfcf" stroke-width="1"/></svg>
<div class="a" style="left:40px;top:311px;width:156px;height:88px;border-radius:5px;overflow:hidden;background:linear-gradient(180deg,#5a2cf2 0%,#4a18e4 100%);box-shadow:0 0 0 1px #3a2a50"><div class="a" style="left:0;top:0;width:78px;height:88px;background:linear-gradient(160deg,#3a10b8 0%,#5522e8 60%,#6a30ff 100%)"></div><div class="a" style="left:19px;top:8px;width:38px;height:38px;border-radius:50%;background:radial-gradient(circle,#1a1a1e 0%,#0a0a0c 35%,#141418 60%,#050506 100%);box-shadow:0 0 3px rgba(0,0,0,0.5)"></div><div class="a" style="left:21px;top:56px;width:1px;height:23px;background:#a070ff"></div><div class="a" style="left:24px;top:56px;width:12px;height:3px;background:#9a80ff"></div><div class="t" style="left:23.5px;top:61px;font-size:9px;font-weight:bold;color:#fff;line-height:8.6px">Camera<br>Lens</div><svg style="left:78px;top:0px;" width="78" height="88" viewBox="0 0 78 88" preserveAspectRatio="none"><defs><linearGradient id="wd" x1="0" y1="0" x2="1" y2="0.3"><stop offset="0" stop-color="#74462a"/><stop offset="0.5" stop-color="#93603a"/><stop offset="1" stop-color="#78492c"/></linearGradient></defs><rect width="78" height="88" fill="url(#wd)"/><path d="M0 20 H78 M0 45 H78 M0 66 H78" stroke="#5a321a" stroke-width="0.6" opacity="0.5"/><rect x="8" y="8" width="29" height="21" rx="1" fill="#d6d8dc"/><rect x="26" y="10" width="9" height="6" fill="#4a5060"/><rect x="40" y="9" width="7" height="12" fill="#1b1b1d"/><rect x="49" y="8" width="7" height="9" fill="#1b1b1d"/><rect x="58" y="10" width="6" height="8" fill="#222"/><rect x="67" y="9" width="7" height="20" rx="2" fill="#17171a"/><rect x="40" y="23" width="12" height="8" fill="#1e1e20"/><rect x="56" y="20" width="6" height="12" fill="#e8e0d8"/><rect x="57" y="22" width="4" height="8" fill="#d2553a"/><path d="M2 35 Q4 28 10 32" stroke="#1a1a1a" stroke-width="1.6" fill="none"/><path d="M4 36 Q2 48 4 58" stroke="#151515" stroke-width="2" fill="none"/><rect x="7" y="32" width="15" height="28" rx="2" fill="#7a726a"/><rect x="7" y="43" width="15" height="3" fill="#3a342e"/><rect x="24" y="33" width="13" height="16" rx="2" fill="#19191b"/><rect x="24" y="51" width="12" height="8" fill="#e0e0e0"/><rect x="25" y="52" width="10" height="6" fill="#d4583b"/><path d="M42 40 Q56 32 71 40 L73 80 Q57 88 42 80 Z" fill="#2b2c31"/><path d="M45 44 Q57 38 69 44" stroke="#46474e" stroke-width="1.2" fill="none"/><rect x="12" y="63" width="10" height="15" rx="2" fill="#141416"/><rect x="25" y="63" width="8" height="13" rx="2" fill="#18181a"/><rect x="35" y="62" width="6" height="13" rx="2" fill="#18181a"/></svg><div class="a" style="left:5px;top:4px;width:6px;height:4px;background:#e8ddff;border-radius:1px"></div><div class="a" style="right:5px;top:4px;width:5px;height:3px;background:#f0eaff;border-radius:1px"></div></div>
<div class="t" style="left:12.5px;top:309px;font-size:16.5px;color:#e6e6e6;font-family:'Liberation Sans'">4</div><svg style="left:10px;top:326px" width="14" height="11" viewBox="0 0 14 11"><path d="M8.5 0.5 L9.9 3.9 L13.5 4.1 L10.7 6.4 L11.6 10 L8.5 8 L5.4 10 L6.3 6.4 L3.5 4.1 L7.1 3.9 Z" fill="#f2f2f2"/><path d="M1 2.5 H3 M1 5.5 H2 M1 8.5 H3" stroke="#cfcfcf" stroke-width="1"/></svg>
<svg style="left:13px;top:425px" width="10" height="10" viewBox="0 0 10 10"><path d="M9 1 V9 H1 Z" fill="#e0e0e0"/></svg>
<div class="t" style="left:31.5px;top:424.5px;font-size:13.4px;color:#e6e6e6">Assets</div>
<div class="a" style="left:40px;top:452px;width:156px;height:88px;border-radius:5px;overflow:hidden;background:linear-gradient(180deg,#5a2cf2 0%,#4a18e4 100%);box-shadow:0 0 0 1px #3a2a50"><svg style="left:20px;top:5px" width="116" height="78" viewBox="0 0 116 78"><defs><linearGradient id="wd5" x1="0" y1="0" x2="1" y2="0.2"><stop offset="0" stop-color="#6a3d20"/><stop offset="0.5" stop-color="#8d5a36"/><stop offset="1" stop-color="#74462a"/></linearGradient></defs><rect width="116" height="78" fill="url(#wd5)"/><path d="M0 18 H116 M0 40 H116 M0 60 H116" stroke="#5a321a" stroke-width="0.6" opacity="0.45"/><rect x="31" y="8" width="26" height="18" rx="1" fill="#cfcfd2"/><rect x="48" y="10" width="7" height="4" fill="#5a6070"/><rect x="58" y="9" width="6" height="10" fill="#19191b"/><rect x="66" y="9" width="6" height="7" fill="#1b1b1d"/><rect x="74" y="10" width="5" height="7" fill="#222"/><rect x="81" y="9" width="5" height="17" rx="2" fill="#161618"/><rect x="58" y="21" width="10" height="7" fill="#1e1e20"/><rect x="71" y="20" width="6" height="10" fill="#e6dcd2"/><rect x="72" y="22" width="4" height="6" fill="#d2553a"/><path d="M10 30 Q4 22 8 18 Q12 16 14 24 Q18 34 30 38 L34 40" stroke="#141414" stroke-width="2" fill="none"/><rect x="30" y="29" width="13" height="21" rx="2" fill="#5e554d"/><rect x="45" y="30" width="12" height="17" rx="2" fill="#18181a"/><rect x="47" y="47" width="9" height="6" fill="#e0e0e0"/><rect x="48" y="48" width="7" height="4" fill="#d4583b"/><path d="M60 36 Q74 28 88 36 L90 72 Q74 80 60 72 Z" fill="#2a2b30"/><path d="M63 40 Q74 34 85 40" stroke="#404148" stroke-width="1.2" fill="none"/><rect x="33" y="54" width="8" height="13" rx="2" fill="#141416"/><rect x="43" y="55" width="7" height="11" rx="2" fill="#18181a"/><rect x="52" y="54" width="7" height="12" rx="2" fill="#18181a"/><rect x="40" y="73" width="38" height="2" fill="#222" opacity="0.7"/></svg><div class="a" style="left:5px;top:4px;width:6px;height:4px;background:#e8ddff;border-radius:1px"></div><div class="a" style="right:5px;top:4px;width:5px;height:3px;background:#f0eaff;border-radius:1px"></div></div>
<div class="t" style="left:12.5px;top:450px;font-size:16.5px;color:#e6e6e6;font-family:'Liberation Sans'">5</div><svg style="left:10px;top:467px" width="14" height="11" viewBox="0 0 14 11"><path d="M8.5 0.5 L9.9 3.9 L13.5 4.1 L10.7 6.4 L11.6 10 L8.5 8 L5.4 10 L6.3 6.4 L3.5 4.1 L7.1 3.9 Z" fill="#f2f2f2"/><path d="M1 2.5 H3 M1 5.5 H2 M1 8.5 H3" stroke="#cfcfcf" stroke-width="1"/></svg>
<div class="a" style="left:40px;top:564px;width:156px;height:88px;border-radius:5px;overflow:hidden;background:linear-gradient(180deg,#5a2cf2 0%,#4a18e4 100%);box-shadow:0 0 0 1px #3a2a50"><svg style="left:0;top:0" width="156" height="88" viewBox="0 0 156 88"><path d="M27 24 L50 12 L60 34 L38 45 Z" fill="#141416"/><rect x="37" y="14" width="11" height="7" transform="rotate(-25 42 17)" fill="#2a2a2e"/><circle cx="45" cy="29" r="6" fill="#222226"/><circle cx="118.5" cy="24.7" r="11.2" fill="#0b0b0d"/><circle cx="118.5" cy="24.7" r="5" fill="#1e1e22"/><path d="M60 52 Q58 46 64 42 L82 35 Q88 34 92 38 L100 56 Q102 62 98 66 L86 80 Q80 83 74 80 L62 70 Q58 66 58 60 Z" fill="#222226"/><path d="M64 46 L84 38 L98 58" stroke="#3a3a40" stroke-width="1.4" fill="none"/></svg><div class="a" style="left:5px;top:4px;width:6px;height:4px;background:#e8ddff;border-radius:1px"></div><div class="a" style="right:5px;top:4px;width:5px;height:3px;background:#f0eaff;border-radius:1px"></div></div>
<div class="t" style="left:12.5px;top:562px;font-size:16.5px;color:#e6e6e6;font-family:'Liberation Sans'">6</div><svg style="left:10px;top:579px" width="14" height="11" viewBox="0 0 14 11"><path d="M8.5 0.5 L9.9 3.9 L13.5 4.1 L10.7 6.4 L11.6 10 L8.5 8 L5.4 10 L6.3 6.4 L3.5 4.1 L7.1 3.9 Z" fill="#f2f2f2"/><path d="M1 2.5 H3 M1 5.5 H2 M1 8.5 H3" stroke="#cfcfcf" stroke-width="1"/></svg>
<div class="a" style="left:37px;top:673px;width:162px;height:94px;border-radius:7px;border:2.5px solid #f3c9b3"></div>
<div class="a" style="left:40px;top:676px;width:156px;height:88px;border-radius:5px;overflow:hidden;background:linear-gradient(180deg,#5a2cf2 0%,#4a18e4 100%);box-shadow:0 0 0 1px #4a3a90"><div class="a" style="left:21px;top:16px;width:14px;height:3px;background:#9c86ff"></div><div class="t" style="left:21px;top:23px;font-size:10.5px;font-weight:bold;color:#fff;line-height:10px">Travel<br>Gear</div><div class="a" style="left:21px;top:48px;width:30px;height:1px;background:#b9a6ff"></div><div class="a" style="left:21px;top:51px;width:26px;height:1px;background:#b9a6ff"></div><div class="a" style="left:21px;top:54px;width:28px;height:1px;background:#b9a6ff"></div><div class="a" style="left:21px;top:57px;width:20px;height:1px;background:#b9a6ff"></div><div class="a" style="left:22px;top:64px;width:4px;height:4px;border-right:1.3px solid #ff7a12;border-bottom:1.3px solid #ff7a12"></div><div class="a" style="left:72px;top:14px;width:1px;height:25px;background:#ff7a12"></div><div class="a" style="left:74px;top:15px;width:14px;height:3px;background:#9c86ff"></div><div class="t" style="left:74px;top:21px;font-size:8.3px;font-weight:bold;color:#fff;line-height:7.9px">Travel<br>Camera</div><div class="a" style="left:72px;top:50px;width:1px;height:25px;background:#ff7a12"></div><div class="a" style="left:74px;top:51px;width:14px;height:3px;background:#9c86ff"></div><div class="t" style="left:74px;top:57px;font-size:8.3px;font-weight:bold;color:#fff;line-height:7.9px">Travel<br>Bag</div><div class="a" style="left:110px;top:50px;width:1px;height:25px;background:#ff7a12"></div><div class="a" style="left:112px;top:51px;width:14px;height:3px;background:#9c86ff"></div><div class="t" style="left:112px;top:57px;font-size:8.3px;font-weight:bold;color:#fff;line-height:7.9px">Camera<br>Lens</div><div class="a" style="left:5px;top:4px;width:6px;height:4px;background:#e8ddff;border-radius:1px"></div><div class="a" style="right:5px;top:4px;width:5px;height:3px;background:#f0eaff;border-radius:1px"></div></div>
<div class="t" style="left:12.5px;top:673px;font-size:16.5px;color:#e6e6e6;font-family:'Liberation Sans'">7</div><svg style="left:10px;top:690px" width="14" height="11" viewBox="0 0 14 11"><path d="M8.5 0.5 L9.9 3.9 L13.5 4.1 L10.7 6.4 L11.6 10 L8.5 8 L5.4 10 L6.3 6.4 L3.5 4.1 L7.1 3.9 Z" fill="#f2f2f2"/><path d="M1 2.5 H3 M1 5.5 H2 M1 8.5 H3" stroke="#cfcfcf" stroke-width="1"/></svg>
<div class="a" style="left:40px;top:787px;width:156px;height:88px;border-radius:5px;overflow:hidden;background:linear-gradient(180deg,#5a2cf2 0%,#4a18e4 100%);box-shadow:0 0 0 1px #3a2a50"><div class="a" style="left:0;top:0;width:78px;height:88px;background:radial-gradient(ellipse at 40% 85%,#6a38ff 0%,#4a1ad8 45%,#2e0a98 100%)"></div><div class="a" style="left:78px;top:0;width:78px;height:88px;background:linear-gradient(180deg,#5c2ef6,#4b1ae6)"></div><div class="a" style="left:5px;top:4px;width:6px;height:4px;background:#e8ddff;border-radius:1px"></div><div class="a" style="right:5px;top:4px;width:5px;height:3px;background:#f0eaff;border-radius:1px"></div></div>
<div class="t" style="left:12.5px;top:785px;font-size:16.5px;color:#e6e6e6;font-family:'Liberation Sans'">8</div><svg style="left:10px;top:802px" width="14" height="11" viewBox="0 0 14 11"><path d="M8.5 0.5 L9.9 3.9 L13.5 4.1 L10.7 6.4 L11.6 10 L8.5 8 L5.4 10 L6.3 6.4 L3.5 4.1 L7.1 3.9 Z" fill="#f2f2f2"/><path d="M1 2.5 H3 M1 5.5 H2 M1 8.5 H3" stroke="#cfcfcf" stroke-width="1"/></svg>
<svg style="left:13px;top:902px" width="10" height="10" viewBox="0 0 10 10"><path d="M9 1 V9 H1 Z" fill="#e0e0e0"/></svg>
<div class="t" style="left:31.5px;top:901.5px;font-size:13.4px;color:#e6e6e6">Tutorial</div>
<div class="a" style="left:40px;top:929px;width:156px;height:88px;border-radius:5px;overflow:hidden;background:linear-gradient(180deg,#5a2cf2 0%,#4a18e4 100%);box-shadow:0 0 0 1px #3a2a50"><div class="a" style="left:0;top:0;width:78px;height:88px;background:radial-gradient(ellipse at 40% 90%,#6a34ff 0%,#4a1ad8 50%,#300c9e 100%)"></div><svg style="left:78px;top:0px;" width="78" height="88" viewBox="0 0 78 88" preserveAspectRatio="none"><defs><linearGradient id="wd" x1="0" y1="0" x2="1" y2="0.3"><stop offset="0" stop-color="#74462a"/><stop offset="0.5" stop-color="#93603a"/><stop offset="1" stop-color="#78492c"/></linearGradient></defs><rect width="78" height="88" fill="url(#wd)"/><path d="M0 20 H78 M0 45 H78 M0 66 H78" stroke="#5a321a" stroke-width="0.6" opacity="0.5"/><rect x="8" y="8" width="29" height="21" rx="1" fill="#d6d8dc"/><rect x="26" y="10" width="9" height="6" fill="#4a5060"/><rect x="40" y="9" width="7" height="12" fill="#1b1b1d"/><rect x="49" y="8" width="7" height="9" fill="#1b1b1d"/><rect x="58" y="10" width="6" height="8" fill="#222"/><rect x="67" y="9" width="7" height="20" rx="2" fill="#17171a"/><rect x="40" y="23" width="12" height="8" fill="#1e1e20"/><rect x="56" y="20" width="6" height="12" fill="#e8e0d8"/><rect x="57" y="22" width="4" height="8" fill="#d2553a"/><path d="M2 35 Q4 28 10 32" stroke="#1a1a1a" stroke-width="1.6" fill="none"/><path d="M4 36 Q2 48 4 58" stroke="#151515" stroke-width="2" fill="none"/><rect x="7" y="32" width="15" height="28" rx="2" fill="#7a726a"/><rect x="7" y="43" width="15" height="3" fill="#3a342e"/><rect x="24" y="33" width="13" height="16" rx="2" fill="#19191b"/><rect x="24" y="51" width="12" height="8" fill="#e0e0e0"/><rect x="25" y="52" width="10" height="6" fill="#d4583b"/><path d="M42 40 Q56 32 71 40 L73 80 Q57 88 42 80 Z" fill="#2b2c31"/><path d="M45 44 Q57 38 69 44" stroke="#46474e" stroke-width="1.2" fill="none"/><rect x="12" y="63" width="10" height="15" rx="2" fill="#141416"/><rect x="25" y="63" width="8" height="13" rx="2" fill="#18181a"/><rect x="35" y="62" width="6" height="13" rx="2" fill="#18181a"/></svg><div class="a" style="left:5px;top:4px;width:6px;height:4px;background:#e8ddff;border-radius:1px"></div><div class="a" style="right:5px;top:4px;width:5px;height:3px;background:#f0eaff;border-radius:1px"></div></div>
<div class="t" style="left:12.5px;top:927px;font-size:16.5px;color:#e6e6e6;font-family:'Liberation Sans'">9</div>
<div class="a" style="left:217px;top:200px;width:21px;height:853px;background:#101010"></div>
<svg style="left:223px;top:205px" width="10" height="8" viewBox="0 0 10 8"><path d="M5 0.5 L9.5 7.5 H0.5 Z" fill="#8a8a8a"/></svg>
<div class="a" style="left:223px;top:418px;width:9.5px;height:617px;border-radius:5px;background:#8f8f8f"></div>
<svg style="left:223px;top:1040px" width="10" height="8" viewBox="0 0 10 8"><path d="M0.5 0.5 H9.5 L5 7.5 Z" fill="#8a8a8a"/></svg>
<div class="a" style="left:240px;top:200px;width:1px;height:853px;background:#333"></div>
</div></div>
<!-- /THUMBNAIL PANEL -->

<!-- MAIN AREA -->
<div class="a" style="left:241px;top:200px;width:1634px;height:853px;background:#0c0c0c"></div>
<div class="a" style="left:1853px;top:200px;width:21px;height:853px;background:#101010"></div>
<svg style="left:1859.5px;top:205.5px" width="10" height="8" viewBox="0 0 10 8"><path d="M5 0.5 L9.5 7.5 H0.5 Z" fill="#9a9a9a"/></svg>
<div class="a" style="left:1860.4px;top:748.8px;width:8.8px;height:72px;border-radius:4.5px;background:#8f8f8f"></div>
<svg style="left:1859.5px;top:977px" width="10" height="8" viewBox="0 0 10 8"><path d="M0.5 0.5 H9.5 L5 7.5 Z" fill="#8a8a8a"/></svg>
<svg style="left:1859px;top:993px" width="11" height="14" viewBox="0 0 11 14"><path d="M5.5 0.5 L10.5 6 H0.5 Z M5.5 6.5 L10.5 13 H0.5 Z" fill="#9a9a9a"/></svg>
<svg style="left:1859px;top:1013px" width="11" height="14" viewBox="0 0 11 14"><path d="M0.5 0.5 H10.5 L5.5 6.5 Z M0.5 7 H10.5 L5.5 13.5 Z" fill="#9a9a9a"/></svg>
<div class="a" style="left:1874px;top:200px;width:1px;height:853px;background:#3a3a3a"></div>
<div class="a" style="left:1875px;top:200px;width:45px;height:853px;background:#131313"></div>
<svg style="left:1887px;top:211px" width="22" height="23" viewBox="0 0 22 23"><rect x="7" y="2" width="12" height="11" fill="#e9a13a"/><rect x="1.5" y="8" width="10" height="9.5" fill="none" stroke="#cfcfcf" stroke-width="1.3"/><path d="M12 6 V19 L14.5 16.5 L16.5 21 L18 20.3 L16 16 H19.5 Z" fill="#141414" stroke="#d6d6d6" stroke-width="1.1"/></svg>
<svg style="left:1886px;top:255px" width="24" height="25" viewBox="0 0 24 25" fill="none"><path d="M3 9 L8 3 L9.5 1.5 Q11 0.5 11 3 V7 M8 3 L14 9 L9 15 L3 9" stroke="#d0d0d0" stroke-width="1.3"/><path d="M13 7 Q15 6 14.5 9" stroke="#4a9be0" stroke-width="1.3"/><path d="M22 9 L13 19" stroke="#d0d0d0" stroke-width="1.3"/><path d="M8 23 Q8 18 12 18 Q14 19 13.5 21 Q11 24 6.5 23.5" fill="#4a9be0" stroke="#4a9be0" stroke-width="1"/></svg>
<div class="a" style="left:241px;top:1052px;width:1634px;height:1px;background:#2a2a2a"></div>
<!-- /MAIN AREA -->

<!-- SLIDE -->
<div id="slide" class="a">
<div class="a" style="left:-58px;top:-74px;width:240px;height:240px;border-radius:50%;background:radial-gradient(closest-side,rgba(140,100,255,0.42),rgba(140,100,255,0.2) 40%,rgba(140,100,255,0))"></div>
<svg style="left:31px;top:29px" width="62" height="36" viewBox="0 0 62 36"><text x="2.5" y="19.2" font-family="Liberation Sans" font-weight="bold" font-size="24.5" fill="#fff" stroke="#fff" stroke-width="1.6" stroke-linejoin="round" textLength="55" lengthAdjust="spacingAndGlyphs">ONE</text><text x="5.8" y="32" font-family="Liberation Sans" font-weight="bold" font-style="italic" font-size="16" fill="#fff" stroke="#fff" stroke-width="0.9" stroke-linejoin="round" textLength="50" lengthAdjust="spacingAndGlyphs">SKILL</text></svg>
<div class="a" style="left:1399.2px;top:32.1px;width:33px;height:4px;border-radius:2px;background:#fff"></div>
<div class="a" style="left:1399.2px;top:42.0px;width:33px;height:4px;border-radius:2px;background:#fff"></div>
<div class="a" style="left:1399.2px;top:50.9px;width:33px;height:4px;border-radius:2px;background:#fff"></div>
<div class="badge" style="left:193.0px;top:151.0px;width:160px;height:42px"></div><div class="t" style="left:208.00px;top:162.33px;font-size:22.5px;font-weight:bold;color:#fff;letter-spacing:0.550px;">My Favorite</div>
<div class="badge" style="left:696.4px;top:134.0px;width:160px;height:42px"></div><div class="t" style="left:710.40px;top:145.63px;font-size:22.5px;font-weight:bold;color:#fff;letter-spacing:0.560px;">My Favorite</div>
<div class="badge" style="left:696.4px;top:473.5px;width:160px;height:42px"></div><div class="t" style="left:710.40px;top:485.13px;font-size:22.5px;font-weight:bold;color:#fff;letter-spacing:0.560px;">My Favorite</div>
<div class="badge" style="left:1050.4px;top:473.5px;width:160px;height:42px"></div><div class="t" style="left:1064.40px;top:485.13px;font-size:22.5px;font-weight:bold;color:#fff;letter-spacing:0.560px;">My Favorite</div>
<div class="t" style="left:193.55px;top:217.86px;font-size:104px;font-weight:bold;color:#fff;transform:scaleX(1.0521);transform-origin:0 0;">Travel</div>
<div class="t" style="left:190.41px;top:313.96px;font-size:104px;font-weight:bold;color:#fff;transform:scaleX(1.0474);transform-origin:0 0;">Gear</div>
<div class="t" style="left:198.70px;top:454.76px;font-size:16px;color:#eee4ff;letter-spacing:0.35px;transform:scaleX(1.0336);transform-origin:0 0">This modern PowerPoint slide design is</div>
<div class="t" style="left:197.63px;top:477.96px;font-size:16px;color:#eee4ff;letter-spacing:0.35px;transform:scaleX(1.0686);transform-origin:0 0">suitable for business or personal</div>
<div class="t" style="left:197.64px;top:502.06px;font-size:16px;color:#eee4ff;letter-spacing:0.35px;transform:scaleX(1.0588);transform-origin:0 0">slideshows, portfolio presentations,</div>
<div class="t" style="left:197.62px;top:525.26px;font-size:16px;color:#eee4ff;letter-spacing:0.35px;transform:scaleX(1.0771);transform-origin:0 0">school projects and more.</div>
<svg style="left:182px;top:571px" width="80" height="70" viewBox="0 0 80 70" fill="none" stroke="#ff7a12" stroke-width="6" stroke-linecap="round" stroke-linejoin="round" filter="drop-shadow(0 0 5px rgba(255,100,20,0.7))"><path d="M18.8 20 L51.2 51.8 M51.2 20 V51.8 H18.8"/></svg>
<div class="bar" style="left:674px;top:133px;height:236.5px"></div>
<div class="bar" style="left:674px;top:472.6px;height:236.4px"></div>
<div class="bar" style="left:1028.5px;top:472.6px;height:236.4px"></div>
<div class="t" style="left:696.54px;top:187.97px;font-size:78px;font-weight:bold;color:#fff;transform:scaleX(1.0603);transform-origin:0 0;">Travel</div>
<div class="t" style="left:693.71px;top:261.17px;font-size:78px;font-weight:bold;color:#fff;transform:scaleX(1.0975);transform-origin:0 0;">Camera</div>
<div class="t" style="left:696.54px;top:527.97px;font-size:78px;font-weight:bold;color:#fff;transform:scaleX(1.0612);transform-origin:0 0;">Travel</div>
<div class="t" style="left:692.77px;top:601.57px;font-size:78px;font-weight:bold;color:#fff;transform:scaleX(1.0467);transform-origin:0 0;">Bag</div>
<div class="t" style="left:1047.60px;top:527.97px;font-size:78px;font-weight:bold;color:#fff;transform:scaleX(1.1004);transform-origin:0 0;">Camera</div>
<div class="t" style="left:1048.54px;top:601.57px;font-size:78px;font-weight:bold;color:#fff;transform:scaleX(0.9523);transform-origin:0 0;">Lens</div>
<div class="t" style="left:698.26px;top:351.69px;font-size:16.2px;color:#efe6ff;letter-spacing:0.5px;transform:scaleX(1.0435);transform-origin:0 0">Some Awesome Information</div>
<div class="t" style="left:698.26px;top:698.29px;font-size:16.2px;color:#efe6ff;letter-spacing:0.5px;transform:scaleX(1.0435);transform-origin:0 0">Some Awesome Information</div>
<div class="t" style="left:1052.25px;top:698.29px;font-size:16.2px;color:#efe6ff;letter-spacing:0.5px;transform:scaleX(1.0473);transform-origin:0 0">Some Awesome Information</div>
<div class="a" style="left:34px;top:772.7px;width:23px;height:22.6px;border-radius:4px;background:rgba(200,180,255,0.32)"></div>
<div class="t" style="left:40.60000000000002px;top:776.18px;font-size:15.5px;font-weight:bold;color:#fff">7</div>
<div class="t" style="left:1388.60px;top:775.01px;font-size:17px;font-weight:normal;color:#eee6ff;letter-spacing:1.133px;">2023</div>
<svg style="left:736px;top:415px" width="18" height="22" viewBox="0 0 18 22"><path d="M2 1.7 V18 L6 14.3 L9 20.3 L11.3 19.2 L8.5 13.5 H14.2 Z" fill="#fff" stroke="#000" stroke-width="1.1" stroke-linejoin="round"/></svg>
</div>
<div class="a" style="left:318px;top:219px;width:1462px;height:823px;border:1px solid #8275c4;pointer-events:none"></div>
<!-- /SLIDE -->

<!-- STATUS BAR -->
<div class="a" style="left:0;top:1053px;width:1920px;height:27px;background:#141414"></div>
<div class="t" style="left:8.3px;top:1061.5px;font-size:12.4px;color:#e0e0e0;transform:scaleX(0.93);transform-origin:0 0">Slide 7 of 9</div>
<svg style="left:1439px;top:1058px" width="20" height="19" viewBox="0 0 20 19" fill="none" stroke="#d8d8d8" stroke-width="1.2"><path d="M6 4 L9.5 1 L13 4 M1 8 H19 M1 12 H19 M1 16.5 H19"/></svg>
<div class="t" style="left:1460.6px;top:1062.5px;font-size:12.4px;color:#e6e6e6">Notes</div>
<div class="a" style="left:1511px;top:1054px;width:46px;height:26px;background:#1f1f1f"></div>
<svg style="left:1525px;top:1059px" width="18" height="16" viewBox="0 0 18 16" fill="none" stroke="#e0e0e0" stroke-width="1.3"><rect x="1" y="1" width="16" height="14"/><path d="M4 1 V15 M4 12 H17"/><rect x="8" y="4.5" width="6" height="3.5" stroke-width="1"/></svg>
<svg style="left:1570px;top:1059px" width="18" height="16" viewBox="0 0 18 16" fill="none" stroke="#e0e0e0" stroke-width="1.3"><rect x="1" y="1.5" width="6.5" height="5"/><rect x="10.5" y="1.5" width="6.5" height="5"/><rect x="1" y="9.5" width="6.5" height="5"/><rect x="10.5" y="9.5" width="6.5" height="5"/></svg>
<svg style="left:1615px;top:1058px" width="17" height="17" viewBox="0 0 17 17" fill="none" stroke="#e0e0e0" stroke-width="1.2"><path d="M1 1.5 H7 Q8.5 1.5 8.5 3 V16 Q8.5 14.5 7 14.5 H1 Z M16 1.5 H10 Q8.5 1.5 8.5 3 V16 Q8.5 14.5 10 14.5 H16 Z M3 5 H6.5 M3 8 H6.5 M3 11 H6.5 M10.5 5 H14 M10.5 8 H14 M10.5 11 H14" /></svg>
<svg style="left:1660px;top:1058px" width="17" height="18" viewBox="0 0 17 18" fill="none" stroke="#e0e0e0" stroke-width="1.3"><path d="M1 1.5 H16 M2.5 1.5 V10 H14.5 V1.5 M8.5 10 V16.5 M5 16.5 H12 M6 5.5 H11"/></svg>
<div class="a" style="left:1697.5px;top:1066.5px;width:8.5px;height:1.3px;background:#9a9a9a"></div>
<div class="a" style="left:1712px;top:1066.5px;width:111px;height:1.6px;background:#bdbdbd"></div>
<div class="a" style="left:1765.6px;top:1060.6px;width:6.3px;height:12.5px;border-radius:1px;background:#c8c8c8"></div>
<svg style="left:1829px;top:1062px" width="9" height="9" viewBox="0 0 9 9" stroke="#d0d0d0" stroke-width="1.2"><path d="M4.5 0 V9 M0 4.5 H9"/></svg>
<div class="t" style="left:1853px;top:1062px;font-size:12.4px;color:#e6e6e6">102 %</div>
<svg style="left:1897px;top:1058px" width="19" height="18" viewBox="0 0 19 18" fill="none" stroke="#e0e0e0" stroke-width="1.2"><rect x="6" y="5.5" width="7" height="7"/><path d="M7 3 L9.5 0.8 L12 3 M7 15 L9.5 17.2 L12 15 M3 6.5 L0.8 9 L3 11.5 M16 6.5 L18.2 9 L16 11.5"/></svg>
<!-- /STATUS BAR -->

</body></html>
